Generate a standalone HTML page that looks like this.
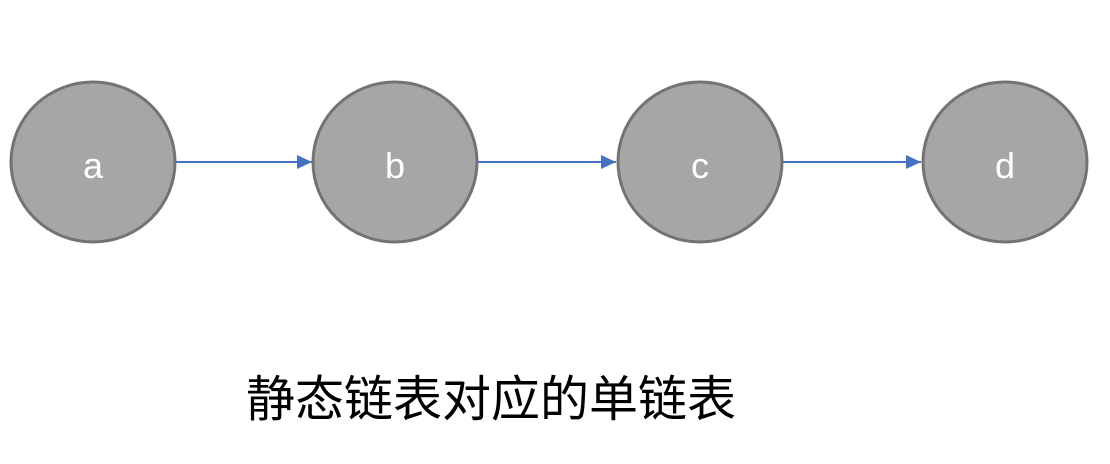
<!DOCTYPE html>
<html><head><meta charset="utf-8"><style>
html,body{margin:0;padding:0;background:#fff;width:1110px;height:464px;overflow:hidden}
</style></head><body>
<svg width="1110" height="464" xmlns="http://www.w3.org/2000/svg">
<defs><marker id="ar" markerWidth="16" markerHeight="16" refX="15" refY="7" orient="auto" markerUnits="userSpaceOnUse"><path d="M0,0 L15,7 L0,14 z" fill="#4472c4"/></marker></defs>
<g fill="#a6a6a6" stroke="#737373" stroke-width="3">
<ellipse cx="93" cy="162" rx="82" ry="80"/>
<ellipse cx="395" cy="162" rx="82" ry="80"/>
<ellipse cx="700" cy="162" rx="82" ry="80"/>
<ellipse cx="1005" cy="162" rx="82" ry="80"/>
</g>
<g stroke="#4472c4" stroke-width="2" marker-end="url(#ar)">
<line x1="176" y1="162" x2="312" y2="162"/>
<line x1="478" y1="162" x2="616" y2="162"/>
<line x1="783" y1="162" x2="921" y2="162"/>
</g>
<g fill="#fff" font-family="Liberation Sans, sans-serif" font-size="36" text-anchor="middle">
<text x="93" y="178">a</text><text x="395" y="178">b</text><text x="700" y="178">c</text><text x="1005" y="178">d</text>
</g>
<text x="491" y="416" text-anchor="middle" font-family="Liberation Sans, Noto Sans CJK SC, sans-serif" font-size="49" fill="#000">静态链表对应的单链表</text>
</svg>
</body></html>
